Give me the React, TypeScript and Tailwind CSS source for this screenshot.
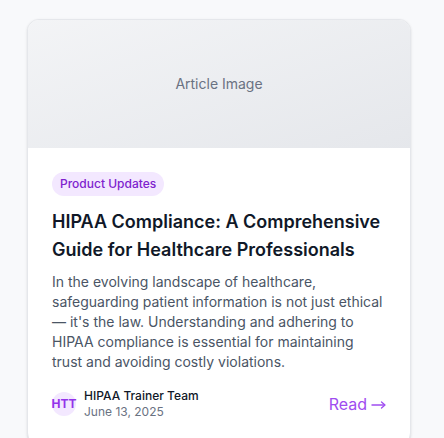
const post = {
  category: "Product Updates",
  title: "HIPAA Compliance: A Comprehensive Guide for Healthcare Professionals",
  excerpt:
    "In the evolving landscape of healthcare, safeguarding patient information is not just ethical — it's the law. Understanding and adhering to HIPAA compliance is essential for maintaining trust and avoiding costly violations.",
  author: "HIPAA Trainer Team",
  initials: "HTT",
  date: "June 13, 2025",
};

const ArticleCard = () => {
  return (
    <div className="w-96 overflow-hidden rounded-xl border border-gray-200 bg-white shadow-sm">
      <div className="flex h-32 items-center justify-center bg-gradient-to-br from-gray-100 to-gray-200">
        <span className="text-sm text-gray-500">Article Image</span>
      </div>
      <div className="p-6">
        <div className="flex">
          <span className="flex h-6 items-center rounded-full bg-[#f3e8ff] px-2 text-xs font-medium text-[#7e22ce]">
            {post.category}
          </span>
        </div>
        <h2 className="mt-3 text-lg font-semibold leading-7 text-gray-900">{post.title}</h2>
        <p className="mt-2 text-sm leading-5 text-gray-600">{post.excerpt}</p>
        <div className="mt-4 flex items-center justify-between">
          <div className="flex items-center gap-2">
            <div className="flex h-6 w-6 items-center justify-center rounded-full bg-[#f3e8ff] text-xs font-bold text-[#9333ea]">
              {post.initials}
            </div>
            <div className="flex flex-col">
              <span className="text-xs font-medium leading-4 text-gray-900">{post.author}</span>
              <span className="text-xs leading-4 text-gray-500">{post.date}</span>
            </div>
          </div>
          <a href="#" className="flex items-center gap-1 text-base text-[#9f4cf0]">
            Read
            {/* long thin arrow */}
            <svg width="15" height="10" viewBox="0 0 15 10" fill="none" stroke="currentColor" strokeWidth="1.3" className="mt-0.5">
              <path d="M0.5 5h13.5" />
              <path d="M10.5 2l3.5 3-3.5 3" strokeLinecap="round" strokeLinejoin="round" />
            </svg>
          </a>
        </div>
      </div>
    </div>
  );
};

export default function App() {
  return (
    <div
      className="min-h-screen bg-[#f8f9fb] pl-[27px] pt-[19px]"
      style={{ fontFamily: "Inter, 'Noto Sans', sans-serif" }}
    >
      <ArticleCard />
    </div>
  );
}
